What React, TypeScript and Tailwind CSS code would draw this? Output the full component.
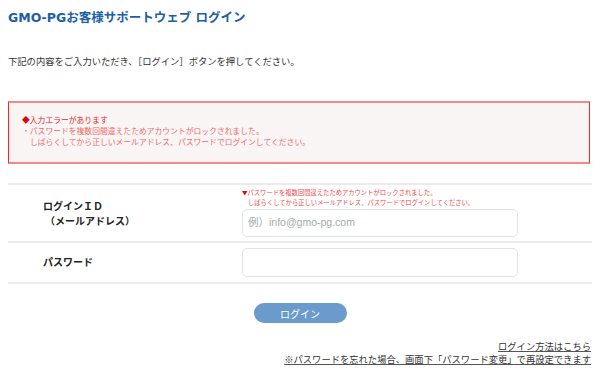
export default function App() {
  return (
    <div
      className="w-[600px] h-[380px] bg-white px-2 text-[#333]"
      style={{ fontFamily: '"Noto Sans CJK JP", sans-serif' }}
    >
      {/* タイトル */}
      <h1
        className="pt-[10px] text-[12.5px] font-bold leading-[16px] text-[#1d5fa6]"
        style={{ fontFamily: '"DejaVu Sans", "Noto Sans CJK JP", sans-serif' }}
      >
        GMO-PGお客様サポートウェブ ログイン
      </h1>
      <p className="mt-[28px] text-[9.3px] leading-[14px] text-[#333]">
        下記の内容をご入力いただき、［ログイン］ボタンを押してください。
      </p>

      {/* エラー表示 */}
      <div className="mt-[33px] mr-[2px] border-y-2 border-x border-y-[#f28a8a] border-x-[#ff2020] bg-[#faf5f5] pl-[13px] pt-[11px] pb-[15px] text-[7.8px] leading-[11px]">
        <p className="text-[#e8262a]">
          <span className="text-[#e00000]">◆</span>入力エラーがあります
        </p>
        <p className="text-[#ef6a6a]">・パスワードを複数回間違えたためアカウントがロックされました。</p>
        <p className="pl-[8px] text-[#ef6a6a]">しばらくしてから正しいメールアドレス、パスワードでログインしてください。</p>
      </div>

      {/* フォーム */}
      <div className="mt-[19px] border-t-2 border-[#ebebeb]">
        <div className="flex border-b-2 border-[#ebebeb]">
          <div className="flex w-[234px] flex-col justify-center pl-[35px] text-[10px] font-bold leading-[15px] text-[#222]">
            <span>ログインＩＤ</span>
            <span className="pl-[2px]">（メールアドレス）</span>
          </div>
          <div className="pt-[3px] pb-[4px]">
            <p className="text-[6.3px] leading-[10px] text-[#f04848]">
              <span className="text-[5.5px] text-[#e00000]">▼</span>パスワードを複数回間違えたためアカウントがロックされました。
            </p>
            <p className="pl-[6px] text-[6.3px] leading-[10px] text-[#f04848]">
              しばらくしてから正しいメールアドレス、パスワードでログインしてください。
            </p>
            <div className="mt-[1px] flex h-[28px] w-[276px] items-center rounded-[5px] border border-[#dfe4ee] bg-white pl-[5px]">
              <span
                className="text-[10.5px] text-[#a3a9b0]"
                style={{ fontFamily: '"Liberation Sans", "Noto Sans CJK JP", sans-serif' }}
              >
                例）info@gmo-pg.com
              </span>
            </div>
          </div>
        </div>
        <div className="flex border-b-2 border-[#ebebeb]">
          <div className="flex w-[234px] items-center pl-[35px] pb-[3px] text-[10px] font-bold leading-[15px] text-[#222]">
            パスワード
          </div>
          <div className="pt-[5px] pb-[5px]">
            <div className="h-[29px] w-[276px] rounded-[5px] border border-[#dfe4ee] bg-white" />
          </div>
        </div>
      </div>

      {/* ボタン */}
      <div className="mt-[19px] flex justify-center">
        <button className="h-[20px] w-[93px] rounded-full bg-[#6a9bcc] text-[10px] text-white">
          ログイン
        </button>
      </div>

      {/* リンク */}
      <div className="mt-[17px] flex flex-col items-end pr-[1px] text-[9.3px] leading-[13px] text-[#333]">
        <a className="underline decoration-[#555]">ログイン方法はこちら</a>
        <a className="underline decoration-[#555]">※パスワードを忘れた場合、画面下「パスワード変更」で再設定できます</a>
      </div>
    </div>
  )
}
